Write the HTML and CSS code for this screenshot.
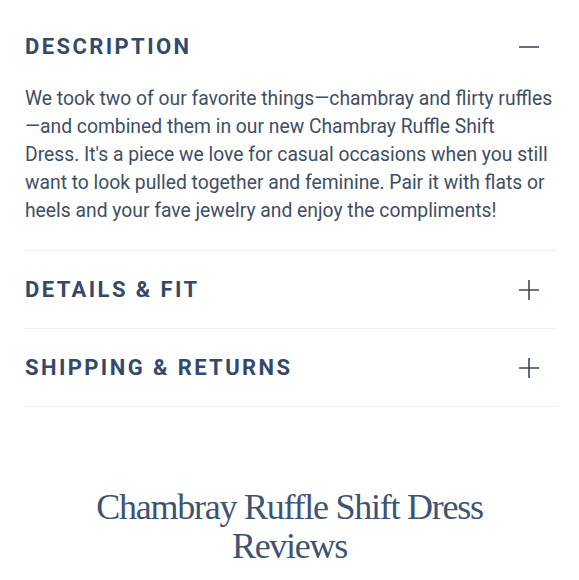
FILE: index.html
```html
<!DOCTYPE html>
<html lang="en">
<head>
  <meta charset="UTF-8" />
  <meta name="viewport" content="width=device-width, initial-scale=1.0"/>
  <title>Chambray Ruffle Shift Dress</title>
  <link rel="stylesheet" href="styles.css">
</head>
<body>
  <div class="product-info">
    <section class="accordion-item open">
      <button class="accordion-head" type="button">
        <span class="accordion-title">Description</span>
        <svg class="accordion-icon" viewBox="0 0 20 20"><path d="M0 10H20"/></svg>
      </button>
      <p class="accordion-body">We took two of our favorite things—chambray and flirty ruffles—and combined them in our new Chambray Ruffle Shift<br>Dress. It's a piece we love for casual occasions when you still want to look pulled together and feminine. Pair it with flats or heels and your fave jewelry and enjoy the compliments!</p>
    </section>

    <section class="accordion-item">
      <button class="accordion-head" type="button">
        <span class="accordion-title">Details &amp; Fit</span>
        <svg class="accordion-icon" viewBox="0 0 20 20"><path d="M0 10H20M10 0V20"/></svg>
      </button>
    </section>

    <section class="accordion-item">
      <button class="accordion-head" type="button">
        <span class="accordion-title">Shipping &amp; Returns</span>
        <svg class="accordion-icon" viewBox="0 0 20 20"><path d="M0 10H20M10 0V20"/></svg>
      </button>
    </section>
  </div>

  <h2 class="reviews-title">Chambray Ruffle Shift Dress Reviews</h2>
</body>
</html>
```

FILE: styles.css
```css
*, *::before, *::after {
  box-sizing: border-box;
}

html, body {
  margin: 0;
  padding: 0;
}

body {
  font-family: Roboto, "Noto Sans", sans-serif;
  background: #ffffff;
  color: #34496a;
  overflow: hidden;
}

.product-info {
  padding: 8px 23px 0 25px;
}

.accordion-item {
  border-bottom: 1px solid #f1efea;
}

.accordion-head {
  display: flex;
  justify-content: space-between;
  align-items: center;
  width: 100%;
  height: 77px;
  padding: 0 17px 0 0;
  background: none;
  border: none;
  cursor: pointer;
}

.accordion-title {
  font-family: Roboto, sans-serif;
  font-size: 22px;
  font-weight: 700;
  letter-spacing: 2.4px;
  text-transform: uppercase;
  color: #34496a;
}

.accordion-icon {
  width: 20px;
  height: 20px;
  fill: none;
  stroke: #3b4a5e;
  stroke-width: 1.6;
}

.accordion-body {
  margin: 0;
  padding: 0 0 25px;
  font-size: 19.3px;
  line-height: 28px;
  color: #3d4e66;
}

.reviews-title {
  margin: 81px 0 0;
  padding: 0 60px;
  font-family: "Liberation Serif", serif;
  font-size: 36px;
  font-weight: 400;
  letter-spacing: -1.25px;
  line-height: 39px;
  text-align: center;
  color: #3d5373;
}
```
